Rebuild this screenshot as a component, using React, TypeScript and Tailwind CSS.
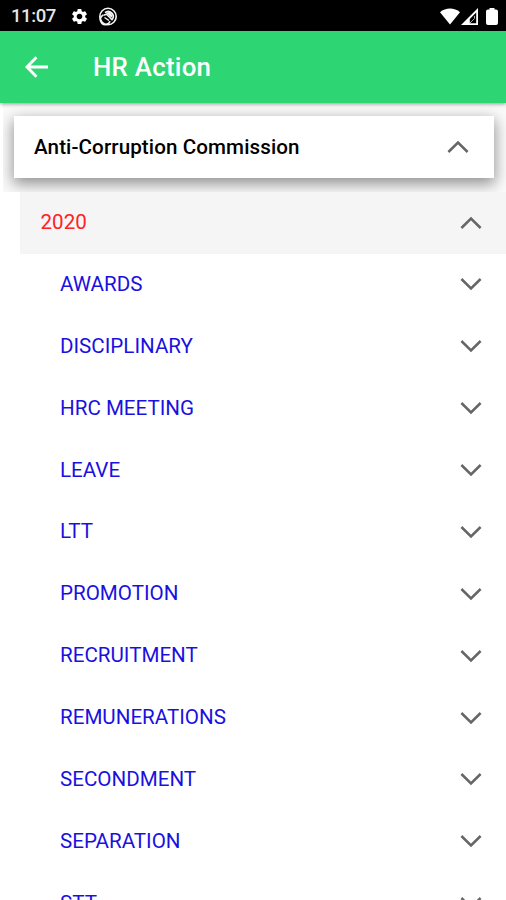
import React from 'react';
import { MdSettings } from 'react-icons/md';

const categories = [
  'AWARDS',
  'DISCIPLINARY',
  'HRC MEETING',
  'LEAVE',
  'LTT',
  'PROMOTION',
  'RECRUITMENT',
  'REMUNERATIONS',
  'SECONDMENT',
  'SEPARATION',
  'STT',
];

function Chevron({ up = false }: { up?: boolean }) {
  return (
    <svg
      className={up ? 'rotate-180' : ''}
      width="22"
      height="14"
      viewBox="0 0 22 14"
      fill="none"
      stroke="#666"
      strokeWidth="2.5"
    >
      <path d="M1.4 2 L11 11.5 L20.6 2" />
    </svg>
  );
}

function StatusBar() {
  return (
    <div className="flex h-[31px] shrink-0 items-center bg-black pl-[11px] pr-[8px] pt-[2px] text-white">
      <span className="w-[59px] text-[18.5px] font-medium leading-none tracking-[-0.4px] text-[#e6e6e6]">11:07</span>
      <MdSettings className="h-[19px] w-[19px]" />
      <svg className="ml-[9px]" width="20" height="20" viewBox="0 0 20 20" fill="none" stroke="#f5f5f5">
        <circle cx="10" cy="9.5" r="8.2" strokeWidth="1.6" />
        <path d="M5.3 8 A5 5 0 1 0 12 14.2 M7 5.6 A5 5 0 0 1 14.2 12.4" strokeWidth="1.7" />
        <path d="M5.5 8.2 L8.5 7.2 L14.5 13.2 M6.5 10.5 L11 13.5" strokeWidth="1.5" />
        <path d="M7.5 5.5 L12 5 L14.5 8.5 L13.5 10.8Z" fill="#f5f5f5" stroke="none" />
      </svg>
      <div className="ml-auto flex items-center">
        <svg width="20" height="17" viewBox="0 0 20 17" fill="#fff">
          <path d="M0 4.2 C5.5 -0.8 14.5 -0.8 20 4.2 L10 16.5Z" />
        </svg>
        <svg className="ml-[1px]" width="17" height="17" viewBox="0 0 17 17">
          <path fill="#fff" fillRule="evenodd" d="M0 17 L17 0 V17Z M8.8 15.2 H15.2 V4.5 L8.8 10.9Z" />
          <path fill="none" stroke="#aaa" d="M9 15 L13.5 10.5 V8" />
        </svg>
        <svg className="ml-[8px]" width="12" height="17" viewBox="0 0 12 17" fill="#fff">
          <path d="M3.5 0 H8.5 V1.5 H10 Q12 1.5 12 3.5 V15 Q12 17 10 17 H2 Q0 17 0 15 V3.5 Q0 1.5 2 1.5 H3.5Z" />
        </svg>
      </div>
    </div>
  );
}

export default function App() {
  return (
    <div className="flex h-[900px] w-[506px] flex-col overflow-hidden bg-white font-['Roboto',sans-serif]">
      <StatusBar />
      <header className="relative z-10 flex h-[72px] shrink-0 items-center bg-[#2ed573] pl-[25px] text-white shadow-[0_1px_4px_rgba(0,0,0,0.4)]">
        <button className="w-[68px]" aria-label="Back">
          <svg width="24" height="22" viewBox="0 0 24 22" fill="none" stroke="#fff" strokeWidth="2.9">
            <path d="M11.5 1.2 L2 11 L11.5 20.8 M2 11 H23" />
          </svg>
        </button>
        <h1 className="pt-[2px] text-[25.8px] font-medium leading-none tracking-[0.28px]">HR Action</h1>
      </header>

      <main>
        <div className="ml-[3px] h-[88.5px] overflow-hidden bg-[#fafafa] pl-[11px] pr-[12px] pt-[13px]">
          <div className="flex h-[62px] items-center justify-between bg-white pl-[20px] pr-[25px] shadow-[0_5px_14px_1px_rgba(0,0,0,0.42)]">
            <h2 className="pt-px text-[20.6px] font-medium tracking-[0.1px] text-black">Anti-Corruption Commission</h2>
            <Chevron up />
          </div>
        </div>

        <div className="ml-[20px] flex h-[62px] items-center justify-between bg-[#f5f5f5] pl-[20.5px] pr-[24px]">
          <span className="text-[20.6px] text-[#f22]">2020</span>
          <Chevron up />
        </div>

        <ul>
          {categories.map((name) => (
            <li key={name} className="flex h-[61.88px] items-center justify-between pl-[60px] pr-[24px]">
              <span className="text-[20.6px] text-[#1a10e0]">{name}</span>
              <Chevron />
            </li>
          ))}
        </ul>
      </main>
    </div>
  );
}
